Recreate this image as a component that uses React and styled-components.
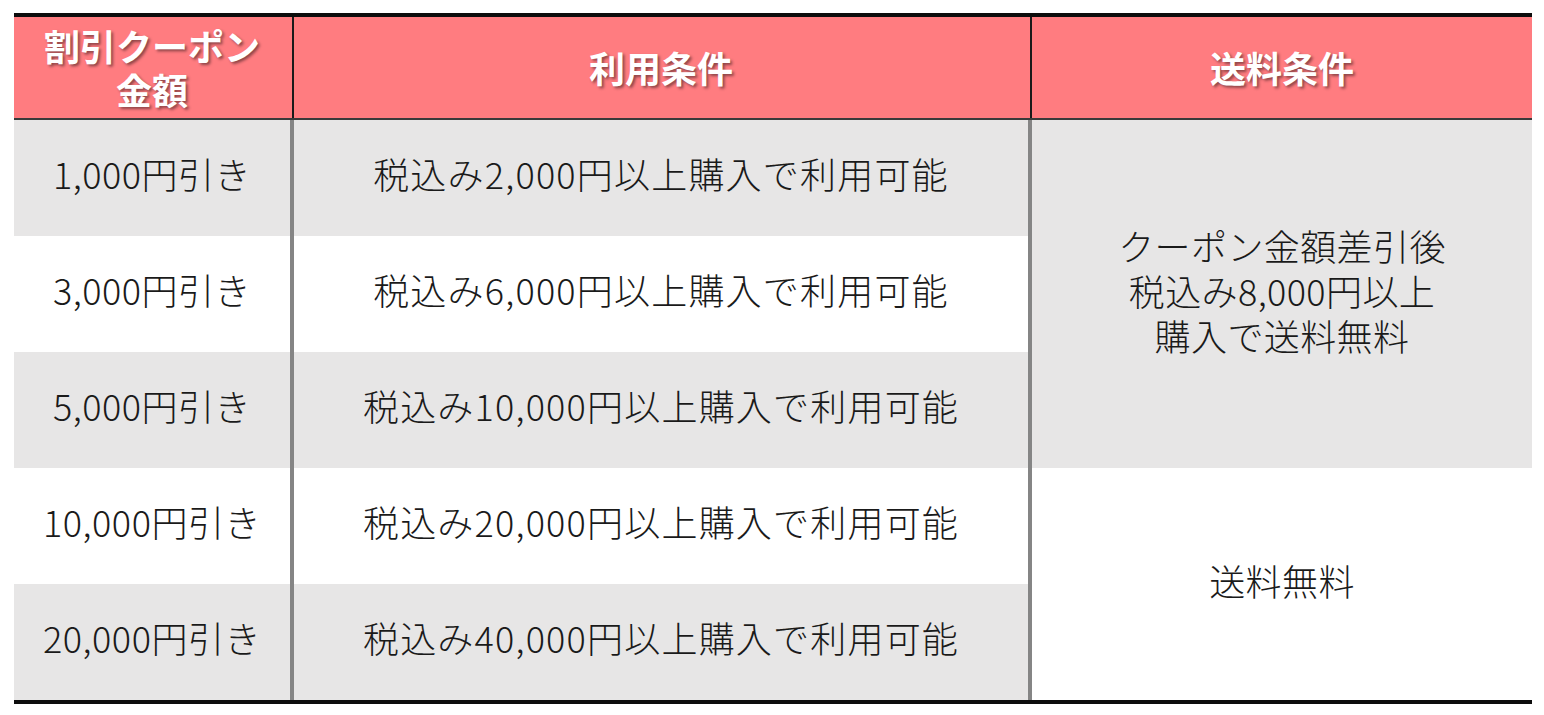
import styled, { createGlobalStyle } from "styled-components"

const GlobalStyle = createGlobalStyle`
  * { box-sizing: border-box; }
  body {
    margin: 0;
    background: #ffffff;
    font-family: "Noto Sans CJK JP", "Noto Sans", sans-serif;
    color: #1a1a1a;
  }
`

const rows = [
    { amount: "1,000円引き", cond: "税込み2,000円以上購入で利用可能" },
    { amount: "3,000円引き", cond: "税込み6,000円以上購入で利用可能" },
    { amount: "5,000円引き", cond: "税込み10,000円以上購入で利用可能" },
    { amount: "10,000円引き", cond: "税込み20,000円以上購入で利用可能" },
    { amount: "20,000円引き", cond: "税込み40,000円以上購入で利用可能" },
]

export default function App() {
    return (
        <>
            <GlobalStyle />
            <Page>
                <Table>
                    <HeadCell>割引クーポン<br />金額</HeadCell>
                    <HeadDivider />
                    <HeadCell>利用条件</HeadCell>
                    <HeadDivider />
                    <HeadCell>送料条件</HeadCell>

                    {rows.map((r, i) => (
                        <Cell key={"a" + i} $col={1} $row={i + 2} $shade={i % 2 === 0}>
                            {r.amount}
                        </Cell>
                    ))}
                    <Divider $col={2} />
                    {rows.map((r, i) => (
                        <Cell key={"c" + i} $col={3} $row={i + 2} $shade={i % 2 === 0} $wide>
                            {r.cond}
                        </Cell>
                    ))}
                    <Divider $col={4} />
                    <MergedCell $start={2} $span={3} $shade>
                        クーポン金額差引後<br />税込み8,000円以上<br />購入で送料無料
                    </MergedCell>
                    <MergedCell $start={5} $span={2}>
                        送料無料
                    </MergedCell>
                </Table>
            </Page>
        </>
    )
}

const Page = styled.div`
padding: 13px 0 0 14px;
`

const Table = styled.div`
width: 1518px;
display: grid;
grid-template-columns: 276px 4px 734px 4px 500px;
grid-template-rows: 103px repeat(5, 116px);
border-top: 4px solid #0d0d0d;
border-bottom: 4px solid #0d0d0d;
`

const HeadCell = styled.div`
background-color: #FF7C80;
border-bottom: 2px solid #3a3a3a;
display: flex;
align-items: center;
justify-content: center;
text-align: center;
color: #ffffff;
font-size: 36px;
font-weight: 700;
line-height: 44px;
padding-bottom: 2px;
text-shadow: 2px 2px 3px rgba(0, 0, 0, 0.45);
`

const HeadDivider = styled.div`
background-color: #FF7C80;
border-bottom: 2px solid #3a3a3a;
display: flex;
justify-content: center;
&::before{
    content: "";
    width: 2px;
    margin-left: 2px;
    background-color: #1a1a1a;
}
`

const Cell = styled.div`
grid-column: ${p => p.$col};
grid-row: ${p => p.$row};
background-color: ${p => p.$shade ? "#E7E6E6" : "#FFFFFF"};
display: flex;
align-items: center;
justify-content: center;
font-size: 36px;
font-weight: 300;
letter-spacing: ${p => p.$wide ? "1.2px" : "0.5px"};
line-height: 46px;
padding-bottom: 10px;
white-space: nowrap;
`

const MergedCell = styled.div`
grid-column: 5;
grid-row: ${p => p.$start} / span ${p => p.$span};
background-color: ${p => p.$shade ? "#E7E6E6" : "#FFFFFF"};
display: flex;
align-items: center;
justify-content: center;
text-align: center;
font-size: 36px;
font-weight: 300;
letter-spacing: 0.4px;
line-height: 45px;
padding-bottom: 8px;
`

const Divider = styled.div`
grid-column: ${p => p.$col};
grid-row: 2 / span 5;
background-color: #858585;
`
